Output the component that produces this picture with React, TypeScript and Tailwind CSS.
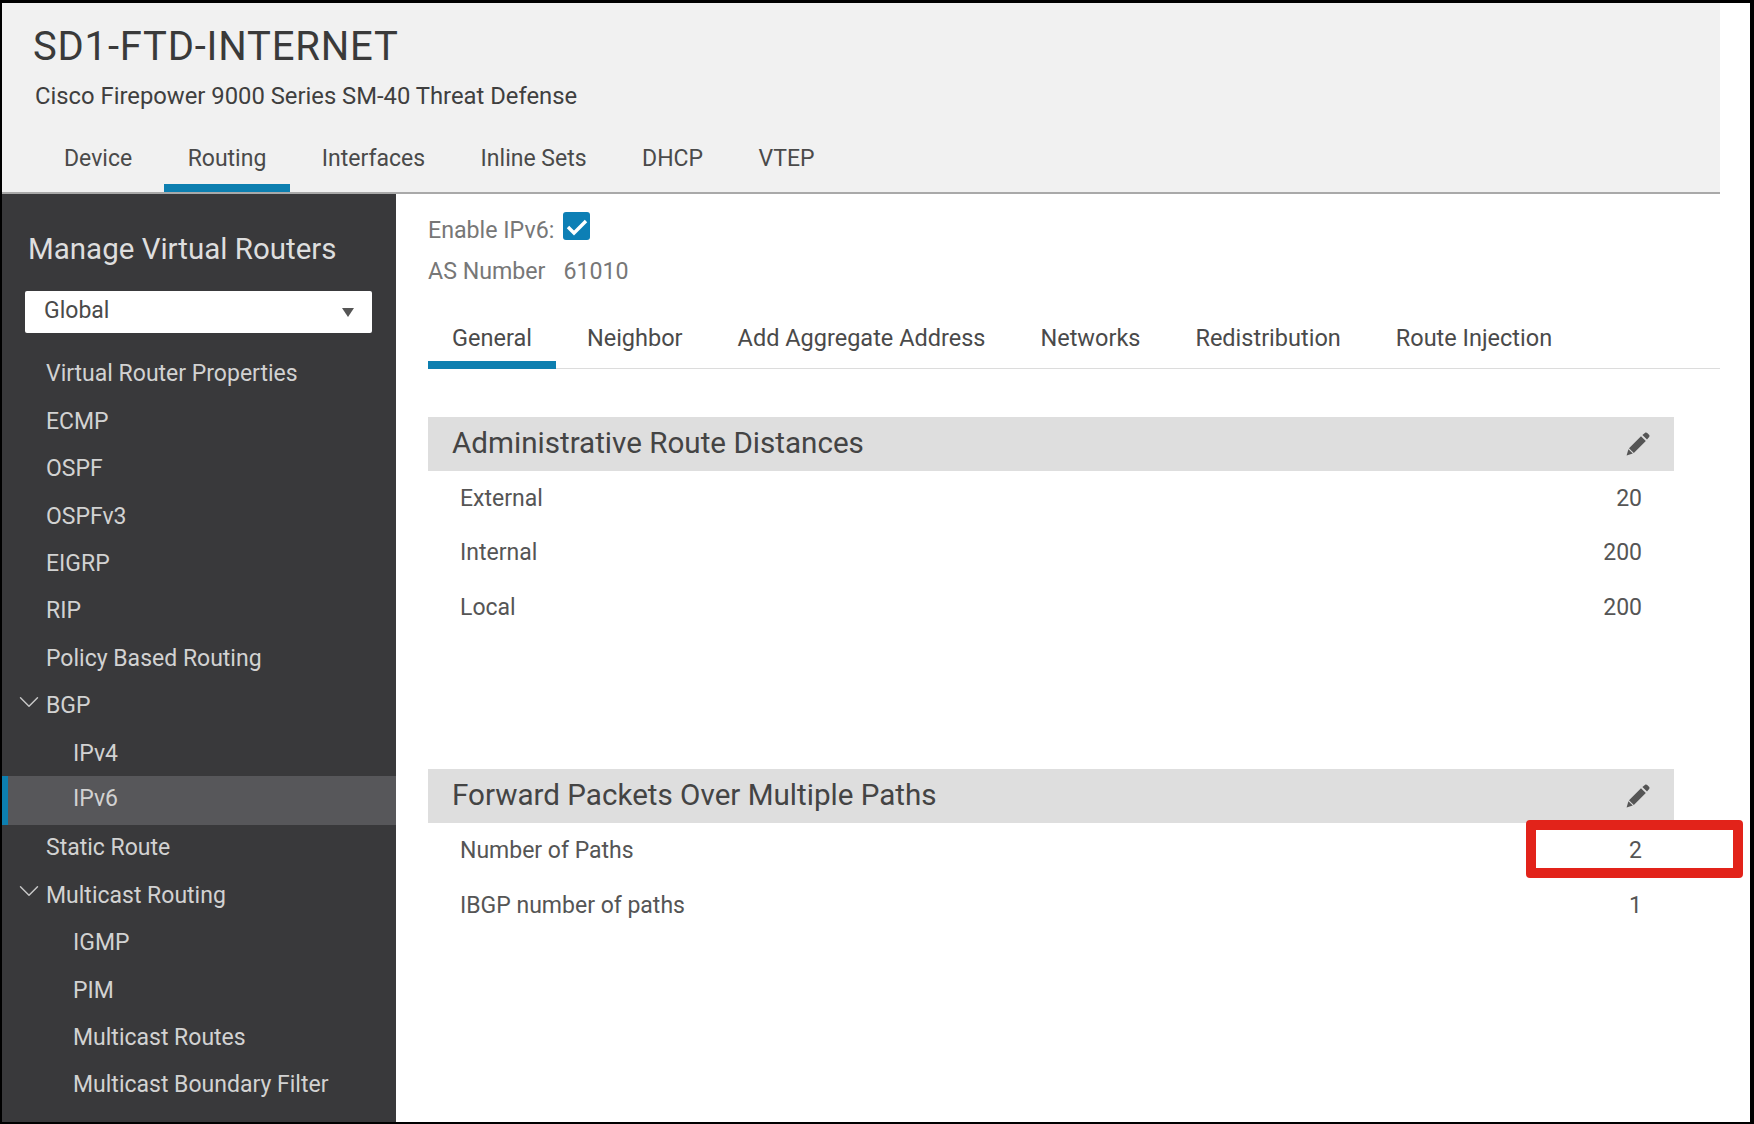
import { ChevronDown } from "lucide-react";

const TOP_TABS = ["Device", "Routing", "Interfaces", "Inline Sets", "DHCP", "VTEP"];
const SUB_TABS = ["General", "Neighbor", "Add Aggregate Address", "Networks", "Redistribution", "Route Injection"];

const NAV = [
  { label: "Virtual Router Properties" },
  { label: "ECMP" },
  { label: "OSPF" },
  { label: "OSPFv3" },
  { label: "EIGRP" },
  { label: "RIP" },
  { label: "Policy Based Routing" },
  { label: "BGP", open: true },
  { label: "IPv4", sub: true },
  { label: "IPv6", sub: true, active: true },
  { label: "Static Route" },
  { label: "Multicast Routing", open: true },
  { label: "IGMP", sub: true },
  { label: "PIM", sub: true },
  { label: "Multicast Routes", sub: true },
  { label: "Multicast Boundary Filter", sub: true },
];

function Pencil() {
  return (
    <svg viewBox="0 0 24 24" className="w-[24px] h-[24px] text-[#555]" fill="currentColor">
      <path d="M16.4 3 18.9.9c.8-.6 1.7-.5 2.3.1l1.8 1.8c.6.6.7 1.5.1 2.3L21 7.6z" />
      <path d="M15 4.2 19.8 9 7.8 21 3 16.2z" />
      <path d="M2.4 17.2 6.8 21.6 .6 23.4z" />
    </svg>
  );
}

function Sidebar() {
  return (
    <aside className="w-[394px] shrink-0 bg-[#39393b] text-[#d2d2d2]">
      <div className="mt-[35px] ml-[26px] h-[40px] flex items-center text-[29.5px] text-[#dedede]">Manage Virtual Routers</div>
      <div className="mt-[22px] ml-[23px] w-[347px] h-[42px] bg-white rounded-[2px] flex items-center justify-between pl-[19px] pr-[18px] text-[23px] text-[#4a4a4a]">
        <span className="-mt-[2px]">Global</span>
        <span className="w-0 h-0 border-x-[6px] border-x-transparent border-t-[9px] border-t-[#555]" />
      </div>
      <ul className="mt-[18px]">
        {NAV.map((item) => (
          <li
            key={item.label}
            className={`relative flex items-center text-[23px] ${item.sub ? "pl-[71px]" : "pl-[44px]"} ${
              item.active ? "-mt-[2px] h-[49.4px] pb-[2px] bg-[#57575a] border-l-[6px] border-[#0d7fb0] !pl-[65px]" : "h-[47.4px]"
            }`}
          >
            {item.open && <ChevronDown className="absolute left-[9.5px] top-[2px] w-[34px] h-[34px] text-[#c8c8c8]" strokeWidth={1} />}
            {item.label}
          </li>
        ))}
      </ul>
    </aside>
  );
}

function Section({ title, rows, className }: { title: string; rows: [string, string][]; className?: string }) {
  return (
    <section className={className}>
      <div className="h-[54px] bg-[#dedede] flex items-center justify-between pl-[24px] pr-[24px] text-[#444]">
        <span className="pb-[2px] text-[29.6px]">{title}</span>
        <Pencil />
      </div>
      {rows.map(([name, value]) => (
        <div key={name} className="h-[54.8px] pt-[1px] flex items-center justify-between pl-[32px] pr-[32px] text-[23px] text-[#555]">
          <span>{name}</span>
          <span>{value}</span>
        </div>
      ))}
    </section>
  );
}

export default function App() {
  return (
    <div className="relative w-[1754px] h-[1124px] bg-black pt-[3px] pl-[2px] pr-[4px] pb-[2px] font-['Roboto',sans-serif]">
      <div className="w-full h-full bg-white flex flex-col">
        <header className="w-[1718px] h-[191px] shrink-0 bg-[#f1f1f1] border-b-[2px] border-[#a9a9a9] flex flex-col">
          <h1 className="mt-[21px] ml-[31px] h-[46px] flex items-center text-[40px] tracking-[0.8px] text-[#3a3a3a]">SD1-FTD-INTERNET</h1>
          <p className="mt-[11px] ml-[33px] h-[32px] flex items-center text-[23.8px] text-[#3f3f3f]">Cisco Firepower 9000 Series SM-40 Threat Defense</p>
          <nav className="mt-auto ml-[38px] flex gap-[7.5px]">
            {TOP_TABS.map((tab) => (
              <div
                key={tab}
                className={`h-[52px] px-[24px] pb-[6px] flex items-center text-[23px] text-[#4a4a4a] border-b-[8px] ${
                  tab === "Routing" ? "border-[#0d7fb0]" : "border-transparent"
                }`}
              >
                {tab}
              </div>
            ))}
          </nav>
        </header>
        <div className="flex-1 flex min-h-0">
          <Sidebar />
          <main className="w-[1324px] pl-[32px]">
            <div className="mt-[21px] h-[30px] flex items-center text-[23.2px] text-[#777]">
              Enable IPv6:
              <span className="ml-[9px] -mt-[9px] w-[27px] h-[28px] rounded-[3px] bg-[#0d7fb5] flex items-center justify-center">
                <svg viewBox="0 0 27 28" className="w-[27px] h-[28px]" fill="none" stroke="white" strokeWidth="3.4">
                  <path d="M5 15 11 21 23 9" />
                </svg>
              </span>
            </div>
            <div className="mt-[11px] h-[30px] flex items-center gap-[18px] text-[23.2px] text-[#777]">
              <span>AS Number</span>
              <span>61010</span>
            </div>
            <nav className="mt-[23px] h-[60px] flex gap-[7px] border-b-[1px] border-[#dcdcdc]">
              {SUB_TABS.map((tab) => (
                <div
                  key={tab}
                  className={`h-[60px] px-[24px] pt-[8px] flex items-center text-[23.5px] text-[#4a4a4a] border-b-[8px] ${
                    tab === "General" ? "border-[#0d7fb0]" : "border-transparent"
                  }`}
                >
                  {tab}
                </div>
              ))}
            </nav>
            <div className="w-[1246px]">
              <Section className="mt-[48px]" title="Administrative Route Distances" rows={[["External", "20"], ["Internal", "200"], ["Local", "200"]]} />
              <Section className="mt-[134px]" title="Forward Packets Over Multiple Paths" rows={[["Number of Paths", "2"], ["IBGP number of paths", "1"]]} />
            </div>
          </main>
        </div>
      </div>
      {/* annotation drawn over the screenshot */}
      <div className="absolute left-[1526px] top-[820px] w-[217px] h-[58px] border-[10px] border-[#e2231a] rounded-[4px]" />
    </div>
  );
}
